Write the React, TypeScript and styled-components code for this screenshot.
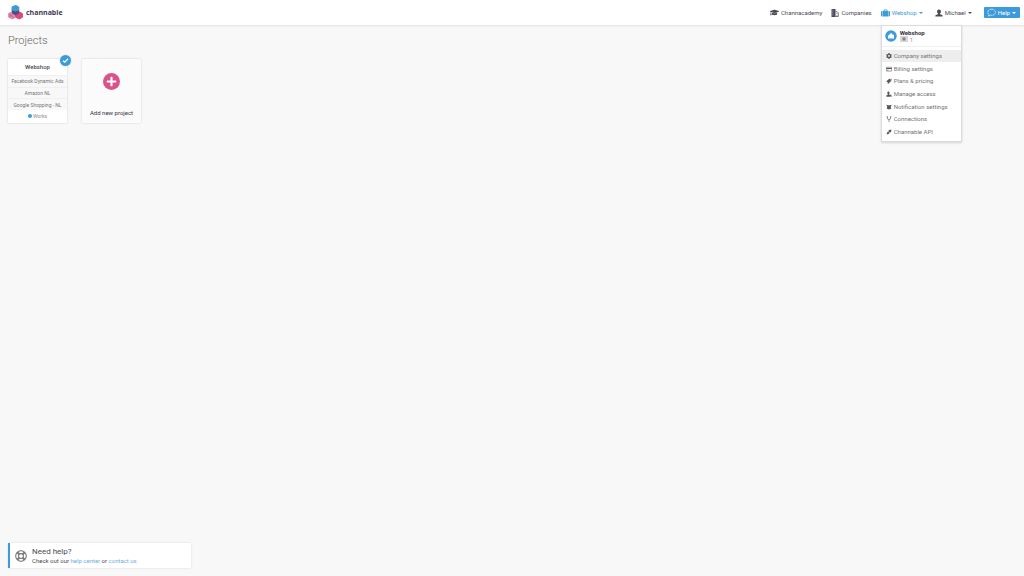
import React from "react";
import styled, { createGlobalStyle } from "styled-components";
import { FaGraduationCap, FaCog, FaRegLifeRing, FaPlus } from "react-icons/fa";

const Global = createGlobalStyle`
  * { box-sizing: border-box; }
  body {
    margin: 0;
    background: #f8f8f8;
    color: #4a4a55;
    font-family: Roboto, "Liberation Sans", sans-serif;
    font-size: 6px;
    line-height: 8px;
  }
  button { font: inherit; color: inherit; border: 0; background: none; padding: 0; cursor: pointer; }
  a { color: inherit; text-decoration: none; }
  ul { list-style: none; margin: 0; padding: 0; }
  h1, h2, p { margin: 0; }
  svg { display: block; flex: none; }
`;

const Page = styled.div`
  min-height: 100vh;
  display: flex;
  flex-direction: column;
`;

const Header = styled.header`
  display: flex;
  align-items: center;
  justify-content: space-between;
  height: 26px;
  padding: 0 4px 0 8px;
  background: #fff;
  border-bottom: 1px solid #e9e9e9;
  box-shadow: 0 1px 1px #f1f1f1;
`;

const Brand = styled.a`
  display: flex;
  align-items: center;
  gap: 3px;
  color: #3f3b52;
  font-family: "Open Sans", Roboto, sans-serif;
  font-size: 7px;
  font-weight: 700;
`;

const Nav = styled.nav`
  display: flex;
  align-items: center;
  gap: 9px;
`;

const NavItem = styled.div`
  position: relative;
`;

const NavLink = styled.a`
  display: flex;
  align-items: center;
  gap: 2px;
`;

const NavToggle = styled.button<{ $active?: boolean }>`
  display: flex;
  align-items: center;
  gap: 2px;
  padding-right: 3px;
  color: ${(p) => (p.$active ? "#3d9bd9" : "inherit")};
`;

const Caret = styled.span`
  border: 2px solid transparent;
  border-top-color: currentColor;
  border-bottom: 0;
`;

const HelpButton = styled.button`
  display: flex;
  align-items: center;
  gap: 2px;
  height: 11px;
  padding: 0 4px 0 3px;
  border-radius: 1px;
  background: #3d9bd9;
  color: #fff;
`;

const Menu = styled.div`
  position: absolute;
  z-index: 1;
  top: 16px;
  left: 0;
  width: 81px;
  padding-bottom: 2px;
  background: #fff;
  border: 1px solid #dcdcdc;
  box-shadow: 0 1px 2px rgba(0, 0, 0, 0.15);
`;

const MenuHead = styled.div`
  display: flex;
  align-items: center;
  gap: 3px;
  height: 21px;
  margin-bottom: 3px;
  padding-left: 3px;
  border-bottom: 1px solid #f0f0f0;
  line-height: 7px;
`;

const MenuName = styled.div`
  color: #33333d;
  font-weight: 700;
`;

const Count = styled.div`
  display: flex;
  align-items: center;
  gap: 2px;
  color: #999;
`;

const MenuList = styled.ul`
  display: grid;
  grid-auto-rows: 1fr;
  height: 89px;
`;

const MenuLink = styled.a<{ $active?: boolean }>`
  display: flex;
  align-items: center;
  gap: 2px;
  height: 100%;
  padding-left: 4px;
  color: #757575;
  background: ${(p) => (p.$active ? "#eeeeee" : "transparent")};
  svg { color: #55555f; }
`;

const Main = styled.main`
  flex: 1;
  padding: 8px;
`;

const Title = styled.h1`
  color: #666;
  font-size: 11px;
  font-weight: 300;
  line-height: 14px;
`;

const Projects = styled.section`
  display: flex;
  gap: 15px;
  margin-top: 11px;
`;

const Card = styled.article`
  position: relative;
  display: flex;
  flex-direction: column;
  width: 59px;
  height: 64px;
  background: #fff;
  border-radius: 1px;
  box-shadow: 0 0 2px rgba(0, 0, 0, 0.2);
  text-align: center;
`;

const CardTitle = styled.h2`
  font-size: 6px;
  font-weight: 500;
  line-height: 16px;
`;

const Channels = styled.ul`
  display: grid;
  grid-auto-rows: 1fr;
  height: 35px;
  background: #f8f8f8;
  color: #777;
  font-size: 5px;
`;

const Channel = styled.li`
  display: grid;
  place-items: center;
  border-top: 1px solid #f0f0f0;
  white-space: nowrap;
`;

const Status = styled.p`
  display: flex;
  flex: 1;
  align-items: center;
  justify-content: center;
  gap: 1px;
  padding-bottom: 2px;
  color: #8a8a8a;
  font-size: 5px;
`;

const Dot = styled.span`
  width: 4px;
  height: 4px;
  border-radius: 50%;
  background: #3d9bd9;
`;

const CheckBadge = styled.span`
  position: absolute;
  top: -4px;
  right: -4px;
  display: grid;
  place-items: center;
  width: 11px;
  height: 11px;
  border-radius: 50%;
  background: #3d9bd9;
  box-shadow: 0 0 1px 1px #ececec;
`;

const AddCard = styled.button`
  display: flex;
  flex-direction: column;
  align-items: center;
  justify-content: space-between;
  width: 59px;
  height: 64px;
  padding: 14px 0 6px;
  background: #fbfbfb;
  border-radius: 1px;
  box-shadow: 0 0 2px rgba(0, 0, 0, 0.2);
  color: #33333d;
`;

const PlusCircle = styled.span`
  display: grid;
  place-items: center;
  width: 17px;
  height: 17px;
  border-radius: 50%;
  background: #d9548c;
  color: #fff;
`;

const HelpBox = styled.aside`
  display: flex;
  align-items: center;
  gap: 5px;
  width: 183px;
  height: 25px;
  margin: 0 8px 8px;
  padding-left: 5px;
  background: #fff;
  border-left: 2px solid #3d9bd9;
  box-shadow: 0 0 2px rgba(0, 0, 0, 0.12);
  svg { color: #7b7b7b; }
`;

const HelpTitle = styled.h2`
  font-size: 8px;
  font-weight: 400;
  line-height: 11px;
`;

const InlineLink = styled.a`
  color: #6fb0dc;
`;

const Logo = () => (
  <svg width="15" height="15" viewBox="0 0 15 15" aria-hidden="true">
    <path d="M7.500 .3 10.800 2v4.400L7.500 8.600 4 6.400V2z" fill="#3d9bd9" stroke="#3d9bd9" strokeLinejoin="round" />
    <path d="M3.600 6.800 7.500 8.700v3.600L4 14 .600 12.100V8.500z" fill="#e08bb0" stroke="#e08bb0" strokeLinejoin="round" />
    <path d="M1 9l5 4M1 12l5-4" stroke="#b85588" strokeWidth=".7" />
    <path d="M11.200 6.800 14.400 8.600v3.700L11.200 14 7.800 12.300V8.500z" fill="#d9487f" stroke="#d9487f" strokeLinejoin="round" />
    <path d="M4 5.200 7.500 6.500 11 5.200v3L7.500 10.600 4 8.200z" fill="#594a7c" />
  </svg>
);

const Buildings = () => (
  <svg width="8" height="8" viewBox="0 0 16 16" aria-hidden="true">
    <path fill="currentColor" fillRule="evenodd" d="M1 0h8v16H1zM3 3v1.500h1.500V3zM3 7v1.500h1.500V7zM3 11v1.500h1.500V11z" />
    <path fill="none" stroke="currentColor" strokeWidth="1.500" d="M9 5.500h3.500l2 2V15H9M11.700 8.500v1.500M11.700 12v1.500" />
  </svg>
);

const Suitcase = () => (
  <svg width="9" height="8" viewBox="0 0 18 16" aria-hidden="true">
    <path fill="currentColor" d="M0 6Q0 4 2 4h1v11H2q-2 0-2-2zM3.800 4h10.400v11H3.800zM15 4h1q2 0 2 2v7q0 2-2 2h-1z" />
    <path fill="none" stroke="currentColor" strokeWidth="1.600" d="M6 4V1.800h6V4" />
  </svg>
);

const Person = () => (
  <svg width="8" height="8" viewBox="0 0 16 16" aria-hidden="true">
    <path fill="currentColor" d="M8 1c2.500 0 3.900 1.600 3.900 4 0 1.800-.7 3.300-1.800 4.100v1.200l4.100 1.900q1 .5 1 1.600V15H.8v-1.200q0-1.100 1-1.600l4.100-1.900V9.100C4.800 8.300 4.100 6.800 4.100 5c0-2.400 1.400-4 3.900-4z" />
  </svg>
);

const Speech = () => (
  <svg width="9" height="9" viewBox="0 0 16 16" aria-hidden="true">
    <path fill="none" stroke="currentColor" strokeWidth="1.200" strokeDasharray="3 .6" d="M8.500 2C4.500 2 1.500 4.300 1.500 7.500c0 1.800.8 3 2 4L2.500 14.500l3.800-1.700c4.800 1 8.700-1.400 8.700-5.300C15 4.300 12.300 2 8.500 2z" />
  </svg>
);

const menuPaths: Record<string, React.ReactNode> = {
  card: (
    <>
      <path fill="none" stroke="currentColor" strokeWidth="1.500" d="M1 3.500h14v10H1z" />
      <path fill="currentColor" d="M1 5h14v3H1zM3 10h4v1.500H3z" />
    </>
  ),
  tag: (
    <>
      <path fill="currentColor" fillRule="evenodd" d="M15 2 14 8 7 14 1 8.500 8 2.500zM11 4v2h2V4z" />
      <path fill="none" stroke="currentColor" strokeWidth="1.200" d="M3 12.500 5 15l4-1" />
    </>
  ),
  access: (
    <path fill="currentColor" d="M6.500 1c2 0 3 1.500 3 3.500S9 7.500 8 8.500v1l4 2V15H1v-3l4-2.500v-1C4 7.500 3.500 6.500 3.500 4.500S4.500 1 6.500 1zM11 8l4 4v3h-2z" />
  ),
  bell: (
    <path fill="currentColor" d="M1 2l4 1h6l4-1-2 5v4l1.500 2h-13L3 11V7zM6 13.500h4L8 15.500z" />
  ),
  fork: (
    <path fill="none" stroke="currentColor" strokeWidth="1.700" d="M3.500 1.500V5q0 4 4.500 4.500 4.500-.5 4.500-4.500V1.500M8 9.500V16M2 2h3M11 2h3" />
  ),
  plug: (
    <path fill="currentColor" d="M14.500 1.500l-1 6-3 2.500L6 5.500 8.500 2.500zM5.500 6.500l4 4L7 13l-5.500 1.500L3 9z" />
  ),
};

const MenuIcon = ({ name }: { name: string }) =>
  name === "cog" ? (
    <FaCog size={6} />
  ) : (
    <svg width="6" height="6" viewBox="0 0 16 16" aria-hidden="true">
      {menuPaths[name]}
    </svg>
  );

const HouseBadge = () => (
  <svg width="12" height="12" viewBox="0 0 24 24" aria-hidden="true">
    <circle cx="12" cy="12" r="11.500" fill="#3d9bd9" />
    <path fill="#fff" d="M6 11l3-1V8l4-2 2 3 3 1v7H6z" />
  </svg>
);

const menuItems = [
  { icon: "cog", label: "Company settings" },
  { icon: "card", label: "Billing settings" },
  { icon: "tag", label: "Plans & pricing" },
  { icon: "access", label: "Manage access" },
  { icon: "bell", label: "Notification settings" },
  { icon: "fork", label: "Connections" },
  { icon: "plug", label: "Channable API" },
];

const channels = ["Facebook Dynamic Ads", "Amazon NL", "Google Shopping - NL"];

export default function App() {
  return (
    <Page>
      <Global />
      <Header>
        <Brand href="#">
          <Logo />
          channable
        </Brand>
        <Nav>
          <NavLink href="#academy">
            <FaGraduationCap size={9} />
            Channacademy
          </NavLink>
          <NavLink href="#companies">
            <Buildings />
            Companies
          </NavLink>
          <NavItem>
            <NavToggle $active aria-expanded="true">
              <Suitcase />
              Webshop
              <Caret />
            </NavToggle>
            <Menu>
              <MenuHead>
                <HouseBadge />
                <div>
                  <MenuName>Webshop</MenuName>
                  <Count>
                    <svg width="8" height="6" viewBox="0 0 16 12" aria-hidden="true">
                      <path fill="#d8d8d8" d="M0 0h16v12H0z" />
                      <path fill="#858585" d="M5 3h6v6H5z" />
                    </svg>
                    1
                  </Count>
                </div>
              </MenuHead>
              <MenuList>
                {menuItems.map((item, i) => (
                  <li key={item.label}>
                    <MenuLink href="#" $active={i === 0}>
                      <MenuIcon name={item.icon} />
                      {item.label}
                    </MenuLink>
                  </li>
                ))}
              </MenuList>
            </Menu>
          </NavItem>
          <NavToggle>
            <Person />
            Michael
            <Caret />
          </NavToggle>
          <HelpButton>
            <Speech />
            Help
            <Caret />
          </HelpButton>
        </Nav>
      </Header>
      <Main>
        <Title>Projects</Title>
        <Projects>
          <Card>
            <CheckBadge>
              <svg width="7" height="7" viewBox="0 0 14 14" aria-hidden="true">
                <path fill="none" stroke="#fff" strokeWidth="2.400" d="M2 7.500l3.500 3L12 3.500" />
              </svg>
            </CheckBadge>
            <CardTitle>Webshop</CardTitle>
            <Channels>
              {channels.map((name) => (
                <Channel key={name}>{name}</Channel>
              ))}
            </Channels>
            <Status>
              <Dot />
              Works
            </Status>
          </Card>
          <AddCard>
            <PlusCircle>
              <FaPlus size={11} />
            </PlusCircle>
            Add new project
          </AddCard>
        </Projects>
      </Main>
      <HelpBox>
        <FaRegLifeRing size={12} />
        <div>
          <HelpTitle>Need help?</HelpTitle>
          <p>
            Check out our <InlineLink href="#help">help center</InlineLink> or{" "}
            <InlineLink href="#contact">contact us</InlineLink>
          </p>
        </div>
      </HelpBox>
    </Page>
  );
}
